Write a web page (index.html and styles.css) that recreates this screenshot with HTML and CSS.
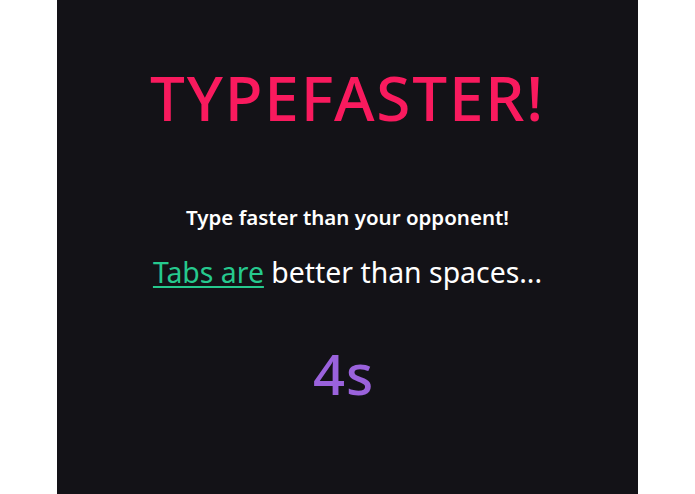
FILE: index.html
```html
<!DOCTYPE html>
<html>
<head>
<meta charset="utf-8">
<link rel="stylesheet" href="styles.css">
</head>
<body>
<main class="game">
  <h1 class="title">TYPEFASTER!</h1>
  <p class="tagline">Type faster than your opponent!</p>
  <p class="phrase"><span class="typed">Tabs are</span> better than spaces...</p>
  <div class="timer">4s</div>
</main>
</body>
</html>
```
FILE: styles.css
```css
html, body {
  margin: 0;
  padding: 0;
  background: #ffffff;
  height: 100%;
}
.game {
  width: 581px;
  height: 494px;
  margin-left: 57px;
  background: #131217;
  display: flex;
  flex-direction: column;
  align-items: center;
  font-family: "Noto Sans", "Open Sans", sans-serif;
  box-sizing: border-box;
  padding-top: 66px;
}
.title {
  margin: 0;
  font-size: 62px;
  line-height: 1;
  font-weight: 500;
  color: #f91a5e;
  letter-spacing: 1.8px;
}
.tagline {
  margin: 79px 0 0;
  font-size: 20.5px;
  line-height: 1;
  font-weight: 600;
  color: #ffffff;
}
.phrase {
  margin: 30px 0 0;
  font-size: 28.4px;
  line-height: 1;
  color: #ffffff;
}
.typed {
  color: #26c98e;
  text-decoration: underline;
  text-decoration-thickness: 2px;
  text-underline-offset: 3px;
}
.timer {
  margin-top: 59px;
  padding-right: 8px;
  font-size: 56px;
  line-height: 1;
  font-weight: 500;
  color: #9a62dc;
  letter-spacing: 1px;
}
```
